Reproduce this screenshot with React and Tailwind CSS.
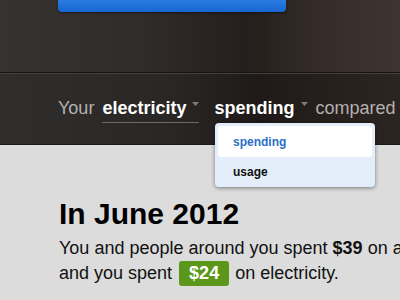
import React from "react";

function Caret() {
  return (
    <svg width="7" height="4" viewBox="0 0 7 4" className="inline-block">
      <path d="M0 0 L7 0 L3.5 4 Z" fill="#7d7a78" />
    </svg>
  );
}

export default function App() {
  return (
    <div
      className="relative w-[400px] h-[300px] overflow-hidden bg-[#dcdcdc]"
      style={{ fontFamily: '"Liberation Sans", Arial, sans-serif' }}
    >
      {/* top header */}
      <div className="h-[72px] bg-[linear-gradient(90deg,#36322f_0%,#302c29_35%,#241e1c_62%,#362d29_82%,#3e3430_100%)]">
        <div className="ml-[58px] w-[228px] h-[12px] overflow-hidden rounded-b-[4px] bg-[linear-gradient(180deg,#2a7be0,#1866d2)] shadow-[0_1px_2px_rgba(0,0,0,0.5)] flex justify-center items-start">
          <div className="mt-[-18px] leading-[16px] text-[16px] font-bold text-[#dbe8fb] whitespace-nowrap">
            Compare your spending
          </div>
        </div>
      </div>
      <div className="h-px bg-[#151312]" />
      <div className="h-px bg-[#45413e]" />
      {/* selector bar */}
      <div className="h-[71px] border-b border-[#1a1716] bg-[linear-gradient(90deg,#2f2e2c_0%,#2a2826_40%,#1f1a19_65%,#27201d_85%,#2c2421_100%)]">
        <div className="flex items-baseline pl-[58px] pt-[22px] text-[18px] leading-[24px] whitespace-nowrap">
          <span className="text-[#b3b1af]">Your</span>
          <span className="ml-[8px] flex items-baseline w-[98px] h-[27px] border-b border-[#6e6b69]">
            <span className="font-bold text-white">electricity</span>
            <span className="ml-[6px] relative top-[-5px]"><Caret /></span>
          </span>
          <span className="ml-[15px] font-bold text-white">spending</span>
          <span className="ml-[7px] relative top-[-5px]"><Caret /></span>
          <span className="ml-[7px] text-[#b3b1af]">compared to</span>
        </div>
      </div>
      {/* content */}
      <div className="pl-[59px] pt-[53px] text-[#111]">
        <div className="text-[30px] leading-[32px] font-bold text-black">In June 2012</div>
        <div className="mt-[6px] text-[18px] leading-[25px] whitespace-nowrap">
          <div>
            You and people around you spent <b>$39</b> on average,
          </div>
          <div>
            and you spent{" "}
            <span className="inline-block ml-[2px] mr-[1px] px-[10px] rounded-[3px] bg-[#5b9819] text-white font-bold leading-[25px]">
              $24
            </span>{" "}
            on electricity.
          </div>
        </div>
      </div>
      {/* dropdown */}
      <div className="absolute left-[215px] top-[123px] w-[160px] h-[64px] rounded-[4px] bg-[#e3eefa] shadow-[0_1px_4px_rgba(0,0,0,0.45)] p-[3px] text-[12px]">
        <div className="h-[31px] rounded-[3px] bg-white pl-[15px] flex items-center font-bold text-[#2b6fc7]">
          spending
        </div>
        <div className="h-[29px] pl-[15px] flex items-center font-bold text-[#111]">
          usage
        </div>
      </div>
    </div>
  );
}
